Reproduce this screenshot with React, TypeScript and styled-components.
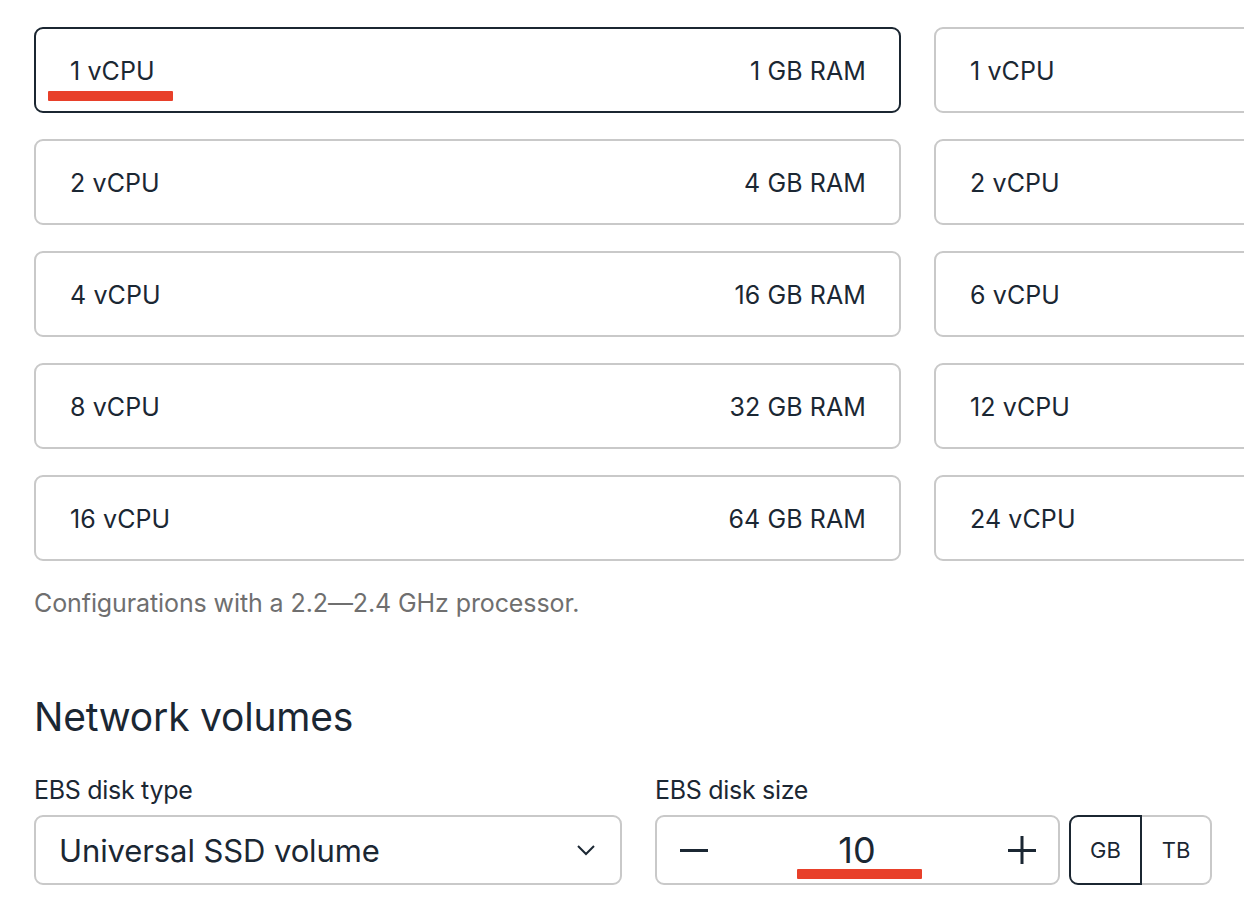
import React from "react";
import styled, { createGlobalStyle } from "styled-components";

const Global = createGlobalStyle`
  html, body { margin: 0; padding: 0; background: #ffffff; overflow: hidden; }
  body { font-family: Inter, "Noto Sans", sans-serif; color: #1b2733; }
`;

const Page = styled.div`
  width: 1244px;
  height: 906px;
  overflow: hidden;
  padding: 27px 0 0 34px;
  box-sizing: border-box;
`;

const Grid = styled.div`
  display: grid;
  grid-template-columns: 867px 867px;
  grid-auto-rows: 86px;
  column-gap: 33px;
  row-gap: 26px;
`;

const Card = styled.div<{ $selected?: boolean }>`
  position: relative;
  box-sizing: border-box;
  display: flex;
  align-items: center;
  justify-content: space-between;
  padding: 2px 33px 0 34px;
  border: 2px solid ${(p) => (p.$selected ? "#1b2631" : "#c9c9c9")};
  border-radius: 9px;
  font-size: 25px;
  letter-spacing: 0.1px;
  color: #1b2733;
`;

const Mark = styled.div<{ $left: number; $top: number; $width: number }>`
  position: absolute;
  left: ${(p) => p.$left}px;
  top: ${(p) => p.$top}px;
  width: ${(p) => p.$width}px;
  height: 10px;
  background: #e8402a;
  border-radius: 1px;
`;

const Caption = styled.p`
  margin: 27px 0 0;
  font-size: 25px;
  line-height: 30px;
  color: #6f6f6f;
  letter-spacing: -0.1px;
`;

const Heading = styled.h2`
  margin: 76px 0 0;
  font-size: 39px;
  line-height: 46px;
  font-weight: 400;
  color: #1b2733;
  letter-spacing: -0.2px;
`;

const Fields = styled.div`
  display: flex;
  gap: 33px;
  margin-top: 35px;
`;

const Field = styled.div`
  display: flex;
  flex-direction: column;
  gap: 10px;
`;

const Label = styled.div`
  font-size: 25px;
  line-height: 30px;
  color: #1b2733;
  letter-spacing: -0.3px;
`;

const Select = styled.div`
  box-sizing: border-box;
  width: 588px;
  height: 70px;
  border: 2px solid #c9c9c9;
  border-radius: 9px;
  display: flex;
  align-items: center;
  justify-content: space-between;
  padding: 0 24px 0 23px;
  font-size: 31px;
  color: #1b2733;
  letter-spacing: -0.1px;
`;

const Row = styled.div`
  display: flex;
  gap: 9px;
`;

const Stepper = styled.div`
  position: relative;
  box-sizing: border-box;
  width: 405px;
  height: 70px;
  border: 2px solid #c9c9c9;
  border-radius: 9px;
  display: flex;
  align-items: center;
  justify-content: space-between;
  padding: 0 21px 0 22px;
`;

const Value = styled.div`
  font-size: 36px;
  color: #1b2733;
  flex: 1;
  text-align: center;
  padding-right: 2px;
`;

const Toggle = styled.div`
  display: flex;
  height: 70px;
`;

const Unit = styled.div<{ $active?: boolean; $side: "l" | "r" }>`
  box-sizing: border-box;
  width: ${(p) => (p.$side === "l" ? 73 : 70)}px;
  height: 70px;
  display: flex;
  align-items: center;
  justify-content: center;
  font-size: 22px;
  color: #1b2733;
  border: 2px solid ${(p) => (p.$active ? "#1b2631" : "#c9c9c9")};
  ${(p) => (p.$side === "r" ? "border-left: none;" : "")}
  border-radius: ${(p) => (p.$side === "l" ? "9px 0 0 9px" : "0 9px 9px 0")};
`;

const rows: [string, string, string][] = [
  ["1 vCPU", "1 GB RAM", "1 vCPU"],
  ["2 vCPU", "4 GB RAM", "2 vCPU"],
  ["4 vCPU", "16 GB RAM", "6 vCPU"],
  ["8 vCPU", "32 GB RAM", "12 vCPU"],
  ["16 vCPU", "64 GB RAM", "24 vCPU"],
];

export default function App() {
  return (
    <>
      <Global />
      <Page>
        <Grid>
          {rows.map(([a, b, c], i) => (
            <React.Fragment key={i}>
              <Card $selected={i === 0}>
                <span>{a}</span>
                <span>{b}</span>
                {i === 0 && <Mark $left={12} $top={62} $width={125} />}
              </Card>
              <Card>
                <span>{c}</span>
              </Card>
            </React.Fragment>
          ))}
        </Grid>
        <Caption>Configurations with a 2.2—2.4 GHz processor.</Caption>
        <Heading>Network volumes</Heading>
        <Fields>
          <Field>
            <Label>EBS disk type</Label>
            <Select>
              <span>Universal SSD volume</span>
              <svg width="20" height="12" viewBox="0 0 20 12" fill="none">
                <path d="M2 2l8 8 8-8" stroke="#1b2733" strokeWidth="2" />
              </svg>
            </Select>
          </Field>
          <Field>
            <Label>EBS disk size</Label>
            <Row>
              <Stepper>
                <svg width="30" height="30" viewBox="0 0 30 30">
                  <rect x="1" y="14" width="28" height="3" fill="#1b2733" />
                </svg>
                <Value>10</Value>
                <svg width="30" height="30" viewBox="0 0 30 30">
                  <rect x="1" y="14" width="28" height="3" fill="#1b2733" />
                  <rect x="13.5" y="1" width="3" height="28" fill="#1b2733" />
                </svg>
                <Mark $left={140} $top={52} $width={125} />
              </Stepper>
              <Toggle>
                <Unit $active $side="l">GB</Unit>
                <Unit $side="r">TB</Unit>
              </Toggle>
            </Row>
          </Field>
        </Fields>
      </Page>
    </>
  );
}
